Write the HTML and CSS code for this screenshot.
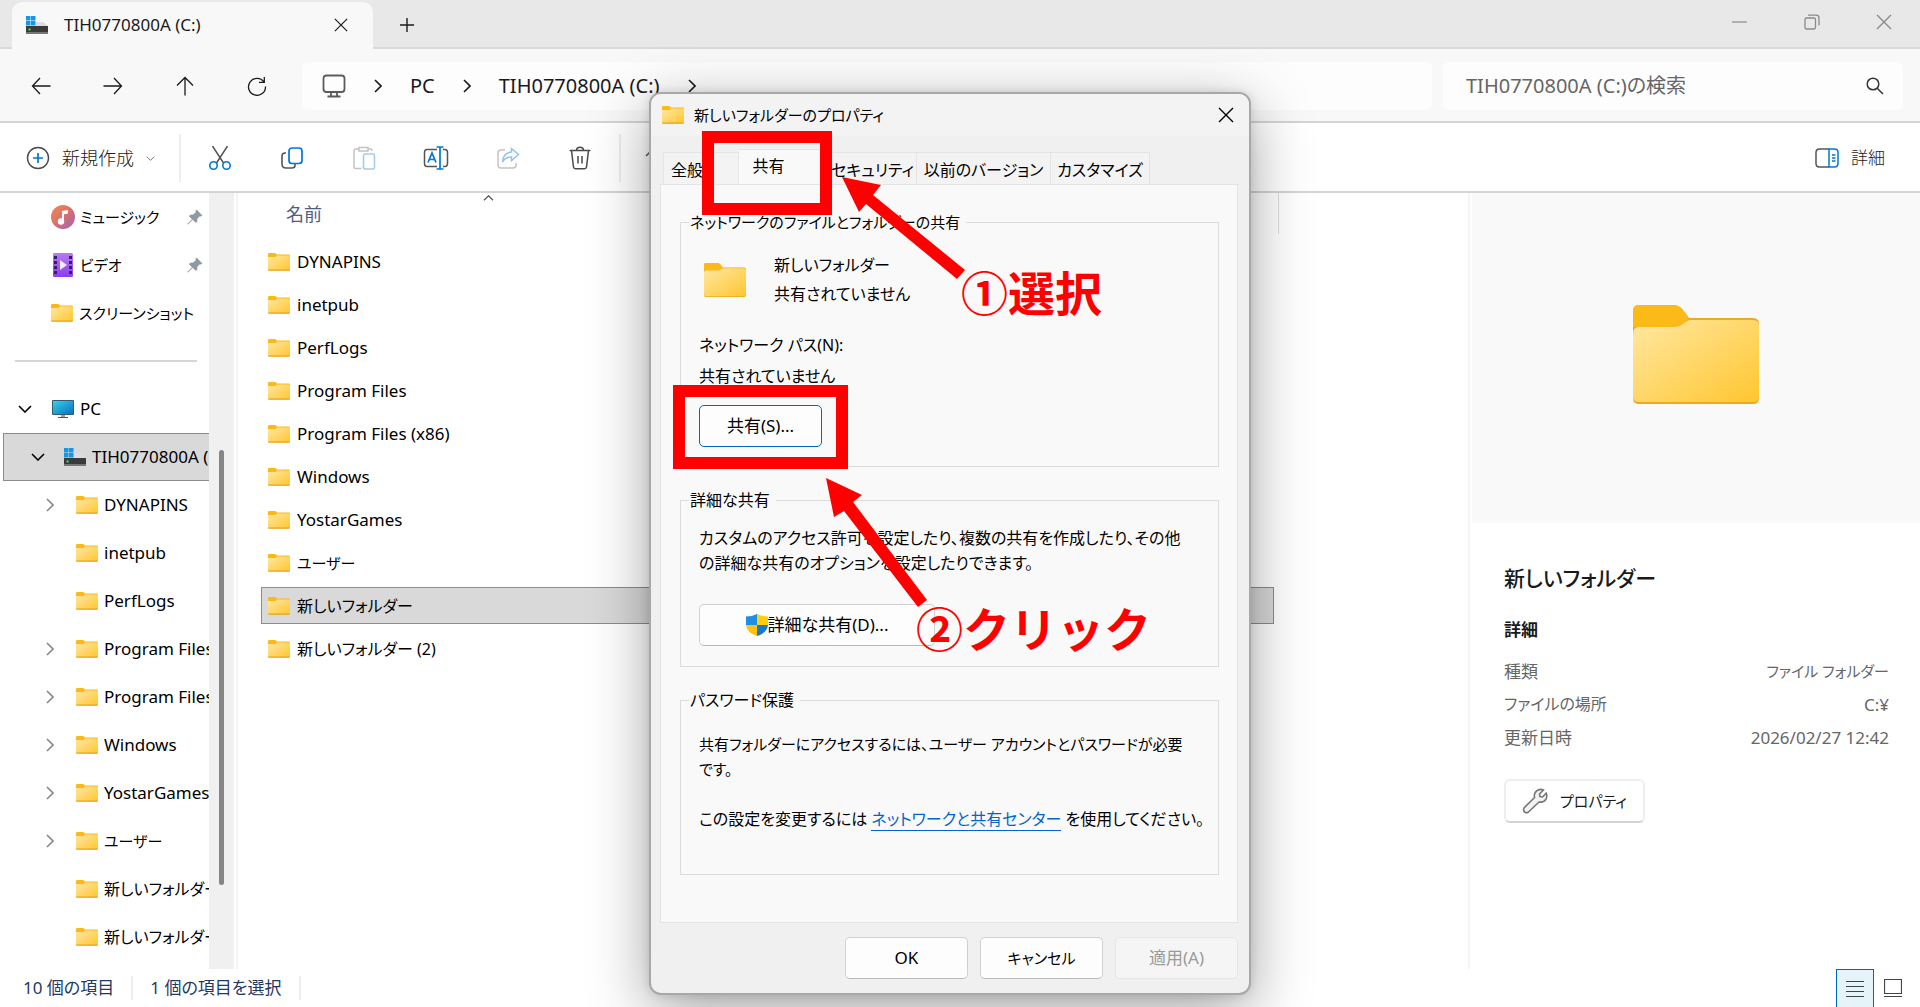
FILE: index.html
```html
<!DOCTYPE html>
<html lang="ja">
<head>
<meta charset="utf-8">
<title>TIH0770800A (C:)</title>
<link rel="stylesheet" href="styles.css">
</head>
<body>
<svg class="defs" aria-hidden="true">
  <defs>
    <linearGradient id="g-folder" x1="0" y1="0" x2="1" y2="1"><stop offset="0" stop-color="#ffe8a2"/><stop offset="1" stop-color="#ffc62f"/></linearGradient>
    <linearGradient id="g-music" x1="0" y1="0" x2="1" y2="1"><stop offset="0" stop-color="#f08a55"/><stop offset=".5" stop-color="#d9706b"/><stop offset="1" stop-color="#9a63c4"/></linearGradient>
    <linearGradient id="g-video" x1="0" y1="0" x2="0" y2="1"><stop offset="0" stop-color="#b77af2"/><stop offset="1" stop-color="#8a3fe8"/></linearGradient>
    <linearGradient id="g-pc" x1="0" y1="0" x2="1" y2="1"><stop offset="0" stop-color="#35d3e4"/><stop offset="1" stop-color="#0c6fc4"/></linearGradient>
    <symbol id="folder" viewBox="0 0 22 18"><path d="M0 1.2Q0 0 1.2 0H6.8Q7.6 0 8 .6L9 1.6H21Q22 1.6 22 2.6V16H0Z" fill="#fbb916"/><path d="M0 4H7.5L9 2.6H22V16.4Q22 17.2 21.2 17.2H.8Q0 17.2 0 16.4Z" fill="url(#g-folder)"/><path d="M0 16.4H22Q22 17.8 21 17.8H1Q0 17.8 0 16.4Z" fill="#e5a11c"/></symbol>
    <symbol id="folder-lg" viewBox="0 0 126 99"><path d="M0 6Q0 0 6 0H40Q46 0 50 5L56 13H120Q126 13 126 19V93Q126 99 120 99H6Q0 99 0 93Z" fill="#eda91f"/><path d="M0 6Q0 0 6 0H40Q46 0 50 5L56 13 50 19 44 22H0Z" fill="#fcba18"/><path d="M0 29Q0 22 6 22H42Q46 22 50 19L54 16Q56 15 58 15H120Q126 15 126 21V91Q126 97 120 97H6Q0 97 0 91Z" fill="url(#g-folder)"/></symbol>
    <symbol id="drive" viewBox="0 0 22 18"><path d="M0 0H4.5V4.5H0ZM5 0H9.5V4.5H5ZM0 5H4.5V9.5H0ZM5 5H9.5V9.5H5Z" fill="#1597e5"/><path d="M10 6H17L22 10H10Z" fill="#dcdce4"/><path d="M0 10H22V17H0Z" fill="#3a3a3a"/><path d="M0 16H22V18H0Z" fill="#777"/><circle cx="3.6" cy="13.4" r="1.2" fill="#3fdc3f"/></symbol>
    <symbol id="chev-r" viewBox="0 0 8 14"><path d="M1 1l6 6-6 6" fill="none" stroke="currentColor" stroke-width="1.6"/></symbol>
    <symbol id="chev-d" viewBox="0 0 14 8"><path d="M1 1l6 6 6-6" fill="none" stroke="currentColor" stroke-width="1.6"/></symbol>
    <symbol id="cross" viewBox="0 0 16 16"><path d="M1 1l14 14M15 1L1 15" fill="none" stroke="currentColor" stroke-width="1.4"/></symbol>
    <symbol id="pin" viewBox="0 0 16 16"><path d="M9.6 .6L15.4 6.4 13.8 7.4 12.8 7.2 10.4 9.8 10.2 12.8 8.8 13.8 5.6 10.8 1.2 15.2 .4 15.4 .6 14.6 5 10.2 2 7.2 3.2 5.8 6.2 5.6 8.8 3.2 8.4 2Z" fill="#8f9ba3"/></symbol>
  </defs>
</svg>

<div class="window">
  <header class="titlebar">
    <div class="tab">
      <svg class="i-folder"><use href="#drive"/></svg>
      <span class="tab-title">TIH0770800A (C:)</span>
      <button class="icon-btn" aria-label="タブを閉じる"><svg width="14" height="14"><use href="#cross"/></svg></button>
    </div>
    <button class="icon-btn new-tab" aria-label="新しいタブ"><svg width="16" height="16" viewBox="0 0 16 16"><path d="M8 1v14M1 8h14" stroke="currentColor" stroke-width="1.4"/></svg></button>
    <div class="win-controls">
      <button class="icon-btn" aria-label="最小化"><svg width="16" height="16" viewBox="0 0 16 16"><path d="M0 8h15" stroke="currentColor" stroke-width="1.2"/></svg></button>
      <button class="icon-btn" aria-label="元に戻す"><svg width="16" height="16" viewBox="0 0 16 16"><path d="M1 5.5Q1 4 2.500 4H10Q11.500 4 11.500 5.500V13Q11.500 15 10 15H2.500Q1 15 1 13ZM4 1.200H12Q15 1.200 15 4V11.500" fill="none" stroke="currentColor" stroke-width="1.300"/></svg></button>
      <button class="icon-btn" aria-label="閉じる"><svg width="16" height="16"><use href="#cross"/></svg></button>
    </div>
  </header>

  <div class="navbar">
    <div class="nav-buttons">
      <button class="icon-btn" aria-label="戻る"><svg width="20" height="18" viewBox="0 0 20 18"><path d="M19.500 9H1.500M9 1L1.500 9 9 17" fill="none" stroke="currentColor" stroke-width="1.300"/></svg></button>
      <button class="icon-btn" aria-label="進む"><svg width="20" height="18" viewBox="0 0 20 18"><path d="M.5 9H18.500M11 1L18.500 9 11 17" fill="none" stroke="currentColor" stroke-width="1.300"/></svg></button>
      <button class="icon-btn" aria-label="上へ"><svg width="18" height="20" viewBox="0 0 18 20"><path d="M9 19.500V1.500M1 9.500L9 1.500 17 9.500" fill="none" stroke="currentColor" stroke-width="1.300"/></svg></button>
      <button class="icon-btn" aria-label="更新"><svg width="20" height="20" viewBox="0 0 20 20"><path d="M17 6A8.500 8.500 0 1 0 18.500 10.500M17.300 1V6.300H12" fill="none" stroke="currentColor" stroke-width="1.300"/></svg></button>
    </div>
    <nav class="address" aria-label="アドレス">
      <svg width="24" height="24" viewBox="0 0 24 24"><path d="M4.500 1.500H19.500Q22.500 1.500 22.500 4.500V15Q22.500 18 19.500 18H4.500Q1.500 18 1.500 15V4.500Q1.500 1.500 4.500 1.500ZM9 18V22M15 18V22M5.500 22.500H18.500" fill="none" stroke="#5c5c5c" stroke-width="1.800"/></svg>
      <svg class="chev-r"><use href="#chev-r"/></svg>
      <a href="#">PC</a>
      <svg class="chev-r"><use href="#chev-r"/></svg>
      <a href="#">TIH0770800A (C:)</a>
      <svg class="chev-r"><use href="#chev-r"/></svg>
    </nav>
    <label class="search">
      <input type="text" placeholder="TIH0770800A (C:)の検索" aria-label="検索">
      <svg width="18" height="18" viewBox="0 0 18 18"><circle cx="7" cy="7" r="5.800" fill="none" stroke="#333" stroke-width="1.500"/><path d="M11.200 11.200L17 17" stroke="#333" stroke-width="1.500"/></svg>
    </label>
  </div>

  <div class="toolbar">
    <button class="new-btn">
      <svg width="24" height="24" viewBox="0 0 24 24"><circle cx="12" cy="12" r="10.500" fill="none" stroke="#4a4a4a" stroke-width="1.400"/><path d="M12 7V17M7 12H17" stroke="#0078d4" stroke-width="1.700"/></svg>
      <span>新規作成</span>
      <svg class="chev-xs"><use href="#chev-d"/></svg>
    </button>
    <div class="tools">
      <button class="icon-btn" aria-label="切り取り"><svg width="24" height="24" viewBox="0 0 24 24"><path d="M4.500 0L15.500 17M19.500 0L8.500 17" stroke="#555" stroke-width="1.500"/><circle cx="5.500" cy="19.500" r="3.700" fill="none" stroke="#0078d4" stroke-width="1.600"/><circle cx="18.500" cy="19.500" r="3.700" fill="none" stroke="#0078d4" stroke-width="1.600"/></svg></button>
      <button class="icon-btn" aria-label="コピー"><svg width="24" height="24" viewBox="0 0 24 24"><path d="M6 7H5Q2 7 2 10V18Q2 22 6 22H12Q15 22 15 19.500V18" fill="none" stroke="#555" stroke-width="1.600"/><rect x="9" y="2" width="13" height="15.500" rx="3" fill="none" stroke="#0078d4" stroke-width="1.700"/></svg></button>
      <button class="icon-btn" aria-label="貼り付け"><svg width="24" height="24" viewBox="0 0 24 24"><path d="M7 3H3.500Q2 3 2 4.500V21Q2 22.500 3.500 22.500H9.500M16 3H18.500Q20 3 20 4.500V5M7 1.500H16V5H7Z" fill="none" stroke="#c4c4c4" stroke-width="1.500"/><rect x="11.500" y="8" width="11" height="15" rx="1.500" fill="none" stroke="#a3cdee" stroke-width="1.600"/></svg></button>
      <button class="icon-btn" aria-label="名前の変更"><svg width="26" height="24" viewBox="0 0 26 24"><path d="M14 3.500H4Q1.500 3.500 1.500 6.500V17.500Q1.500 20.500 4 20.500H14M20 3.500H22Q24.500 3.500 24.500 6.500V17.500Q24.500 20.500 22 20.500H20" fill="none" stroke="#555" stroke-width="1.500"/><path d="M17 1V23M13.500 1H20.500M13.500 23H20.500M5 16.500L9 7 13 16.500M6.500 13.500H11.500" fill="none" stroke="#0078d4" stroke-width="1.700"/></svg></button>
      <button class="icon-btn" aria-label="共有"><svg width="24" height="24" viewBox="0 0 24 24"><path d="M9 4H5Q2 4 2 7V19Q2 22 5 22H17Q20 22 20 19V17" fill="none" stroke="#c4c4c4" stroke-width="1.500"/><path d="M15.500 2.500L22.500 8.500 15.500 14.500V11Q9.500 11 6.500 16Q7 7 15.500 6Z" fill="none" stroke="#8fc4ee" stroke-width="1.500"/></svg></button>
      <button class="icon-btn" aria-label="削除"><svg width="24" height="24" viewBox="0 0 24 24"><path d="M1.500 4.500H22.500M8.500 4.500Q8.500 1.200 12 1.200T15.500 4.500M3.500 4.500L5.500 21Q5.700 22.800 7.500 22.800H16.500Q18.300 22.800 18.500 21L20.500 4.500M10 10V17.500M14 10V17.500" fill="none" stroke="#4a4a4a" stroke-width="1.500"/></svg></button>
    </div>
    <button class="icon-btn sort" aria-label="並べ替え"><svg width="24" height="24" viewBox="0 0 24 24"><path d="M7 22V4M1 10L7 4 13 10M17 4V22M11 16L17 22 23 16" fill="none" stroke="#555" stroke-width="1.500"/></svg></button>
    <button class="details-btn">
      <svg width="24" height="20" viewBox="0 0 24 20"><path d="M14 1H4.500Q1 1 1 4.500V15.500Q1 19 4.500 19H14" fill="none" stroke="#555" stroke-width="1.500"/><path d="M14 1H19.500Q23 1 23 4.500V15.500Q23 19 19.500 19H14ZM17 7H20.500M17 10H20.500M17 13H20.500" fill="none" stroke="#0078d4" stroke-width="1.500"/></svg>
      <span>詳細</span>
    </button>
  </div>

  <main class="content">
    <nav class="tree" aria-label="ナビゲーション">
      <ul>
        <li class="quick"><svg class="i-sq" viewBox="0 0 24 24"><circle cx="12" cy="12" r="12" fill="url(#g-music)"/><path d="M11 16V6L17 5V8.500L13 9.300V16" fill="#fff"/><circle cx="10" cy="16.500" r="3.200" fill="#fff"/></svg><span>ミュージック</span><svg class="pin"><use href="#pin"/></svg></li>
        <li class="quick"><svg class="i-sq" viewBox="0 0 24 24"><rect x="2" width="20" height="24" rx="1.500" fill="url(#g-video)"/><path d="M3 3H6V6H3ZM3 8H6V11H3ZM3 13H6V16H3ZM3 18H6V21H3ZM18 3H21V6H18ZM18 8H21V11H18ZM18 13H21V16H18ZM18 18H21V21H18Z" fill="#3c1874"/><path d="M9 7L16 12 9 17Z" fill="#f4e9ff"/></svg><span>ビデオ</span><svg class="pin"><use href="#pin"/></svg></li>
        <li class="quick"><svg class="i-folder"><use href="#folder"/></svg><span>スクリーンショット</span></li>
        <li class="rule"><hr></li>
        <li class="lv0"><svg class="chev-d"><use href="#chev-d"/></svg><svg class="i-folder" viewBox="0 0 22 18"><rect width="22" height="15" rx="1" fill="#355a78"/><rect x="1" y="1" width="20" height="13" fill="url(#g-pc)"/><path d="M9 15H13V17H9Z" fill="#8aa"/><path d="M6 17H16V18H6Z" fill="#456"/></svg><span>PC</span></li>
        <li class="lv1 current"><svg class="chev-d"><use href="#chev-d"/></svg><svg class="i-folder"><use href="#drive"/></svg><span>TIH0770800A (C:)</span></li>
        <li class="lv2 more"><svg class="chev-r"><use href="#chev-r"/></svg><svg class="i-folder"><use href="#folder"/></svg><span>DYNAPINS</span></li>
        <li class="lv2"><svg class="chev-r"><use href="#chev-r"/></svg><svg class="i-folder"><use href="#folder"/></svg><span>inetpub</span></li>
        <li class="lv2"><svg class="chev-r"><use href="#chev-r"/></svg><svg class="i-folder"><use href="#folder"/></svg><span>PerfLogs</span></li>
        <li class="lv2 more"><svg class="chev-r"><use href="#chev-r"/></svg><svg class="i-folder"><use href="#folder"/></svg><span>Program Files</span></li>
        <li class="lv2 more"><svg class="chev-r"><use href="#chev-r"/></svg><svg class="i-folder"><use href="#folder"/></svg><span>Program Files (x86)</span></li>
        <li class="lv2 more"><svg class="chev-r"><use href="#chev-r"/></svg><svg class="i-folder"><use href="#folder"/></svg><span>Windows</span></li>
        <li class="lv2 more"><svg class="chev-r"><use href="#chev-r"/></svg><svg class="i-folder"><use href="#folder"/></svg><span>YostarGames</span></li>
        <li class="lv2 more"><svg class="chev-r"><use href="#chev-r"/></svg><svg class="i-folder"><use href="#folder"/></svg><span class="kana">ユーザー</span></li>
        <li class="lv2"><svg class="chev-r"><use href="#chev-r"/></svg><svg class="i-folder"><use href="#folder"/></svg><span class="ja">新しいフォルダー</span></li>
        <li class="lv2"><svg class="chev-r"><use href="#chev-r"/></svg><svg class="i-folder"><use href="#folder"/></svg><span class="ja">新しいフォルダー (2)</span></li>
      </ul>
      <div class="scrollbar"><div class="thumb"></div></div>
    </nav>

    <section class="files">
      <table>
        <thead><tr><th scope="col"><svg class="sort-mark"><use href="#chev-d"/></svg>名前</th></tr></thead>
        <tbody>
          <tr><td><div class="file"><svg class="i-folder"><use href="#folder"/></svg>DYNAPINS</div></td></tr>
          <tr><td><div class="file"><svg class="i-folder"><use href="#folder"/></svg>inetpub</div></td></tr>
          <tr><td><div class="file"><svg class="i-folder"><use href="#folder"/></svg>PerfLogs</div></td></tr>
          <tr><td><div class="file"><svg class="i-folder"><use href="#folder"/></svg>Program Files</div></td></tr>
          <tr><td><div class="file"><svg class="i-folder"><use href="#folder"/></svg>Program Files (x86)</div></td></tr>
          <tr><td><div class="file"><svg class="i-folder"><use href="#folder"/></svg>Windows</div></td></tr>
          <tr><td><div class="file"><svg class="i-folder"><use href="#folder"/></svg>YostarGames</div></td></tr>
          <tr><td><div class="file kana"><svg class="i-folder"><use href="#folder"/></svg>ユーザー</div></td></tr>
          <tr><td><div class="file ja selected"><svg class="i-folder"><use href="#folder"/></svg>新しいフォルダー</div></td></tr>
          <tr><td><div class="file ja"><svg class="i-folder"><use href="#folder"/></svg>新しいフォルダー (2)</div></td></tr>
        </tbody>
      </table>
    </section>

    <aside class="details">
      <div class="preview"><svg width="126" height="99"><use href="#folder-lg"/></svg></div>
      <div class="info">
        <h2>新しいフォルダー</h2>
        <h3>詳細</h3>
        <dl>
          <dt>種類</dt><dd class="kana">ファイル フォルダー</dd>
          <dt class="ja">ファイルの場所</dt><dd>C:¥</dd>
          <dt>更新日時</dt><dd>2026/02/27 12:42</dd>
        </dl>
        <button class="prop-btn"><svg width="26" height="26" viewBox="0 0 26 26"><path d="M16 2Q19 .8 21.500 2L17.500 6 18 8.500 20.500 9 24.200 5.200Q25.500 8 24 11.200Q21.500 14.800 17 14L6.500 24Q4.500 25.500 2.500 24Q.8 21.800 2.200 19.800L12.500 9.500Q11.500 4.500 16 2Z" fill="#f2f2f2" stroke="#777" stroke-width="1.600"/></svg><span>プロパティ</span></button>
      </div>
    </aside>
  </main>

  <footer class="statusbar">
    <span>10 個の項目</span>
    <span>1 個の項目を選択</span>
    <div class="views">
      <button class="view active" aria-label="詳細表示"><svg width="18" height="18" viewBox="0 0 18 18"><path d="M0 1.500H18M0 6.500H18M0 11.500H18M0 16.500H18" stroke="#444" stroke-width="1"/></svg></button>
      <button class="view" aria-label="大アイコン"><svg width="18" height="18" viewBox="0 0 18 18"><path d="M.5 .5H17.500V14.500H.5ZM0 17.500H18" fill="none" stroke="#444" stroke-width="1.200"/></svg></button>
    </div>
  </footer>
</div>

<div class="dialog" role="dialog" aria-labelledby="dlg-title">
  <div class="dlg-head">
    <svg class="i-folder"><use href="#folder"/></svg>
    <span id="dlg-title" class="kana">新しいフォルダーのプロパティ</span>
    <button class="icon-btn" aria-label="閉じる"><svg width="16" height="16"><use href="#cross"/></svg></button>
  </div>
  <div class="dlg-body">
    <div class="tabs" role="tablist">
      <button role="tab" class="t-general">全般</button>
      <button role="tab" class="t-share on" aria-selected="true">共有</button>
      <button role="tab" class="t-sec">セキュリティ</button>
      <button role="tab" class="t-prev">以前のバージョン</button>
      <button role="tab" class="t-cust">カスタマイズ</button>
    </div>
    <div class="panel">
      <fieldset class="fs-net">
        <legend class="kana">ネットワークのファイルとフォルダーの共有</legend>
        <div class="share-item">
          <svg width="42" height="34" viewBox="0 0 126 99" preserveAspectRatio="none"><use href="#folder-lg"/></svg>
          <p>新しいフォルダー<br>共有されていません</p>
        </div>
        <p class="net-path">ネットワーク パス(N):<br>共有されていません</p>
        <button class="btn primary">共有(S)...</button>
      </fieldset>
      <fieldset class="fs-adv">
        <legend>詳細な共有</legend>
        <p>カスタムのアクセス許可を設定したり、複数の共有を作成したり、その他<br>の詳細な共有のオプションを設定したりできます。</p>
        <button class="btn wide"><svg width="22" height="22" viewBox="0 0 22 22"><path d="M11 0Q6 2.500 0 2.500V11H11Z" fill="#1e8fe0"/><path d="M11 0Q16 2.500 22 2.500V11H11Z" fill="#ffcf10"/><path d="M0 11Q1 19 11 22V11Z" fill="#ffc20e"/><path d="M22 11Q21 19 11 22V11Z" fill="#1778d0"/></svg>詳細な共有(D)...</button>
      </fieldset>
      <fieldset class="fs-pass">
        <legend>パスワード保護</legend>
        <p class="kana">共有フォルダーにアクセスするには、ユーザー アカウントとパスワードが必要<br>です。</p>
        <p>この設定を変更するには <a href="#">ネットワークと共有センター</a> を使用してください。</p>
      </fieldset>
    </div>
    <div class="dlg-foot">
      <button class="btn">OK</button>
      <button class="btn kana">キャンセル</button>
      <button class="btn" disabled>適用(A)</button>
    </div>
  </div>
  <div class="mark mark-tab"></div>
  <div class="mark mark-btn"></div>
  <svg class="arrows" width="600" height="899" viewBox="650 93 600 899"><path d="M842 177L881 185 873 195 965 270 957 279 866 204 859 212ZM826 478L862 495 853 502 927 600 918 607 844 511 834 517Z" fill="#f00"/></svg>
  <strong class="note note-1">①選択</strong>
  <strong class="note note-2">②クリック</strong>
</div>
</body>
</html>
```
FILE: styles.css
```css
* { box-sizing: border-box; }
html, body { height: 100%; }
body {
  margin: 0;
  position: relative;
  overflow: hidden;
  background: #fff;
  color: #1a1a1a;
  font: 17px/24px "Noto Sans", "Noto Sans CJK JP", sans-serif;
  font-feature-settings: "palt";
}
button, input { font: inherit; font-feature-settings: inherit; color: inherit; background: none; border: 0; padding: 0; margin: 0; }
a { color: inherit; text-decoration: none; }
p, h2, h3, dl, dd, ul, hr { margin: 0; }
svg { flex: none; display: block; }
.defs { position: absolute; width: 0; height: 0; }
.icon-btn { display: flex; align-items: center; justify-content: center; }
.i-folder { width: 22px; height: 18px; }
.i-sq { width: 24px; height: 24px; }
.chev-r { width: 8px; height: 14px; }
.chev-d { width: 14px; height: 8px; }

.window { display: flex; flex-direction: column; min-height: 100%; }

.titlebar { display: flex; height: 49px; background: #e8e8e8; padding-left: 12px; box-shadow: inset 0 -2px #dadada; }
.tab { display: flex; align-items: center; width: 361px; margin-top: 2px; padding: 0 14px 2px; background: #f8f8f8; border-radius: 10px 10px 0 0; }
.tab-title { flex: 1; margin-left: 16px; }
.tab .icon-btn { width: 36px; height: 36px; }
.new-tab { width: 48px; margin-left: 10px; }
.win-controls { display: flex; margin-left: auto; color: #8a8a8a; }
.win-controls .icon-btn { width: 72px; height: 44px; }

.navbar { display: flex; align-items: center; height: 74px; padding: 1px 17px 0 5px; background: #f8f8f8; border-bottom: 2px solid #d4d4d4; }
.nav-buttons { display: flex; margin-right: 9px; }
.nav-buttons .icon-btn { width: 72px; height: 48px; }
.address { display: flex; align-items: center; flex: 1; height: 48px; margin-right: 11px; padding-left: 20px; background: #fdfdfd; border-radius: 6px; font-size: 20px; }
.address .chev-r { margin: 0 28px; }
.search { display: flex; align-items: center; width: 460px; height: 48px; padding: 0 19px 0 23px; background: #fdfdfd; border-radius: 6px; }
.search input { flex: 1; min-width: 0; outline: 0; font-size: 20px; }
.search input::placeholder { color: #666; opacity: 1; }

.toolbar { display: flex; align-items: center; height: 70px; padding-top: 2px; border-bottom: 2px solid #d4d4d4; }
.new-btn { display: flex; align-items: center; gap: 12px; width: 181px; height: 48px; padding-left: 26px; border-right: 2px solid #eee; font-size: 18px; font-weight: 300; }
.chev-xs { width: 9px; height: 5px; color: #777; }
.tools { display: flex; width: 440px; height: 48px; padding-left: 3px; border-right: 2px solid #eee; }
.tools .icon-btn { width: 72px; }
.sort { width: 72px; }
.details-btn { display: flex; align-items: center; gap: 12px; margin-left: auto; margin-right: 35px; font-weight: 300; }

.content { display: flex; flex: 1; }
.tree { display: flex; width: 238px; border-right: 2px solid #f4f4f4; }
.tree ul { width: 209px; padding: 0; list-style: none; overflow: hidden; color: #000; }
.tree li { display: flex; align-items: center; height: 48px; white-space: nowrap; }
.tree li span { margin-left: 6px; }
.quick { padding-left: 51px; font-size: 15px; }
.quick .i-sq + span { margin-left: 5px; }
.pin { width: 16px; height: 16px; margin-left: auto; margin-right: 6px; }
.rule { padding: 0 12px 0 15px; }
.rule hr { width: 100%; border: 0; border-top: 2px solid #d6d6d6; }
.lv0 { padding-left: 18px; }
.lv0 .i-folder { margin-left: 20px; }
.lv1 { margin-left: 3px; padding-left: 27px; }
.lv1 .i-folder { margin-left: 19px; }
.current { background: #d9d9d9; border: 1px solid #8c8c8c; border-right: 0; }
.lv2 { padding-left: 46px; }
.lv2 .i-folder { margin-left: 22px; }
.lv2 .chev-r { color: #888; visibility: hidden; }
.lv2.more .chev-r { visibility: visible; }
.scrollbar { width: 25px; padding: 257px 0 84px; background: #f0f0f0; }
.thumb { width: 5px; height: 100%; margin: 0 auto; border-radius: 3px; background: #858585; }

.files { flex: 1; min-width: 0; padding-left: 23px; }
.files table { width: 1018px; max-width: 100%; border-spacing: 0; }
.files th { position: relative; height: 47px; padding: 0 0 5px 25px; text-align: left; font-size: 18px; font-weight: 400; color: #4d6082; background: linear-gradient(#ddd, #ddd) right top / 1px 41px no-repeat; }
.sort-mark { position: absolute; left: 222px; top: 2px; width: 11px; height: 6px; transform: rotate(180deg); color: #555; }
.files td { padding: 3px 5px 3px 0; color: #000; }
.file { display: flex; align-items: center; gap: 7px; height: 37px; padding-left: 6px; border: 1px solid transparent; }
.selected { background: #d9d9d9; border-color: #8c8c8c; }

.details { width: 452px; border-left: 2px solid #f4f4f4; }
.preview { display: flex; align-items: center; justify-content: center; height: 330px; margin-left: 2px; padding-bottom: 8px; background: #f9f9f9; }
.info { padding: 37px 31px 0 34px; }
h2 { font-size: 21px; line-height: 36px; font-weight: 500; }
h3 { margin: 22px 0 13px; font-size: 17px; line-height: 24px; font-weight: 700; }
dl { display: grid; grid-template-columns: auto auto; justify-content: space-between; line-height: 33px; color: #666; }
dd { text-align: right; }
.prop-btn { display: flex; align-items: center; gap: 12px; height: 44px; margin-top: 25px; padding: 0 16px; border: 2px solid #eee; border-bottom-color: #d4d4d4; border-radius: 6px; font-size: 15px; }

.statusbar { display: flex; align-items: center; height: 38px; padding-left: 23px; color: #1f3864; }
.statusbar > span { height: 24px; margin-right: 17px; padding-right: 17px; border-right: 2px solid #eee; }
.views { display: flex; margin-left: auto; margin-right: 8px; }
.view { display: flex; align-items: center; justify-content: center; width: 38px; height: 38px; border: 1px solid transparent; }
.view.active { background: #e5f3fb; border-color: #0067c0; border-bottom: 0; }

/* properties window floating over the explorer */
.dialog { position: absolute; left: 649px; top: 92px; width: 602px; background: #f0f0f0; border: 2px solid #a8a8a8; border-radius: 12px; color: #000; font-size: 16px; box-shadow: 0 16px 60px rgba(0, 0, 0, .36), 0 0 10px rgba(0, 0, 0, .12); }
.dlg-head { display: flex; align-items: center; gap: 10px; height: 42px; padding-left: 11px; background: #f3f3f3; border-radius: 10px 10px 0 0; }
.dlg-head .icon-btn { width: 46px; height: 42px; margin-left: auto; }
.dlg-body { padding: 13px 11px 14px 9px; }
.tabs { display: flex; align-items: flex-end; height: 35px; padding-left: 3px; }
.tabs button { height: 32px; padding-top: 2px; background: #f3f3f3; border: 1px solid #e4e4e4; border-left-width: 0; border-bottom: 0; text-align: center; white-space: nowrap; }
.tabs .t-general { width: 76px; border-left-width: 1px; padding-right: 28px; }
.tabs .on { width: 90px; height: 35px; background: #f9f9f9; padding: 0 30px 2px 0; }
.t-sec { width: 88px; }
.t-prev { width: 134px; }
.t-cust { width: 99px; }
.panel { height: 739px; padding: 25px 18px 0 19px; background: #f9f9f9; border: 1px solid #e4e4e4; }
fieldset { margin: 0; padding: 0 18px; border: 1px solid #dcdcdc; min-width: 0; white-space: nowrap; }
legend { margin-left: -10px; padding: 0 6px 0 1px; line-height: 24px; }
.fs-net { height: 257px; }
.share-item { display: flex; align-items: center; gap: 28px; padding-left: 5px; margin-top: 17px; }
.share-item p { line-height: 29px; }
.net-path { margin-top: 21px; line-height: 31px; }
.fs-adv { height: 179px; margin-top: 21px; }
.fs-adv p { margin-top: 14px; line-height: 25px; }
.fs-pass { height: 187px; margin-top: 21px; }
.fs-pass p { margin-top: 20px; line-height: 25px; }
.fs-pass p + p { margin-top: 25px; }
.fs-pass a { color: #0066cc; border-bottom: 1px solid #0066cc; }
.btn { display: flex; align-items: center; justify-content: center; width: 123px; height: 42px; background: #fdfdfd; border: 1px solid #d0d0d0; border-bottom-color: #b8b8b8; border-radius: 5px; font-size: 17px; }
.btn.primary { margin-top: 13px; border-color: #0067c0; }
.btn.wide { width: 236px; margin-top: 28px; }
.btn:disabled { color: #9a9a9a; background: #f5f5f5; border-color: #e6e6e6; }
.dlg-foot { display: flex; justify-content: flex-end; gap: 12px; margin-top: 14px; }

.ja { font-size: 16px; }
.kana, .btn.kana { font-size: 15px; }

/* red callouts laid over the window */
.mark { position: absolute; border: 12px solid #f00; }
.mark-tab { left: 51px; top: 37px; width: 130px; height: 84px; }
.mark-btn { left: 22px; top: 291px; width: 175px; height: 84px; }
.arrows { position: absolute; left: -1px; top: -1px; }
.note { position: absolute; color: #f00; font: 700 47px/60px "Noto Sans CJK JP", sans-serif; font-feature-settings: normal; white-space: nowrap; }
.note-1 { left: 310px; top: 167px; }
.note-2 { left: 265px; top: 503px; }
```
